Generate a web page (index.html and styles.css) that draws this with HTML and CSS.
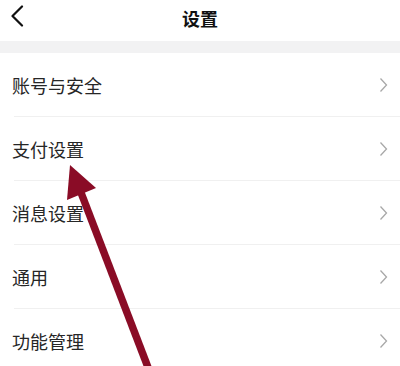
FILE: index.html
```html
<!DOCTYPE html>
<html>
<head>
<meta charset="utf-8">
<link rel="stylesheet" href="styles.css">
</head>
<body>
<div class="page">
  <header class="topbar">
    <svg class="back" viewBox="0 0 14 22" width="14" height="22"><path d="M12 1.5 L2.5 11 L12 20.5" fill="none" stroke="#111" stroke-width="2.2" stroke-linecap="round" stroke-linejoin="round"/></svg>
    <h1 class="title">设置</h1>
  </header>
  <div class="band"></div>
  <ul class="list">
    <li class="row"><span class="label">账号与安全</span><svg class="chev" viewBox="0 0 9 16" width="9" height="16"><path d="M1.5 1.5 L7.5 8 L1.5 14.5" fill="none" stroke="#a8a8a8" stroke-width="1.3"/></svg></li>
    <li class="row"><span class="label">支付设置</span><svg class="chev" viewBox="0 0 9 16" width="9" height="16"><path d="M1.5 1.5 L7.5 8 L1.5 14.5" fill="none" stroke="#a8a8a8" stroke-width="1.3"/></svg></li>
    <li class="row"><span class="label">消息设置</span><svg class="chev" viewBox="0 0 9 16" width="9" height="16"><path d="M1.5 1.5 L7.5 8 L1.5 14.5" fill="none" stroke="#a8a8a8" stroke-width="1.3"/></svg></li>
    <li class="row"><span class="label">通用</span><svg class="chev" viewBox="0 0 9 16" width="9" height="16"><path d="M1.5 1.5 L7.5 8 L1.5 14.5" fill="none" stroke="#a8a8a8" stroke-width="1.3"/></svg></li>
    <li class="row"><span class="label">功能管理</span><svg class="chev" viewBox="0 0 9 16" width="9" height="16"><path d="M1.5 1.5 L7.5 8 L1.5 14.5" fill="none" stroke="#a8a8a8" stroke-width="1.3"/></svg></li>
  </ul>
  <svg class="pointer" viewBox="0 0 400 366" width="400" height="366">
    <line x1="80" y1="190" x2="149" y2="370" stroke="#8a0c26" stroke-width="7.5"/>
    <polygon points="70,165 96,188 67,200" fill="#8a0c26"/>
  </svg>
</div>
</body>
</html>
```
FILE: styles.css
```css
* { box-sizing: border-box; }
html, body { margin: 0; padding: 0; background: #fff; }
body { font-family: "Noto Sans CJK SC", "Noto Sans", sans-serif; color: #222; }
.page { position: relative; width: 400px; height: 366px; overflow: hidden; }
.topbar { position: relative; height: 41px; display: flex; align-items: center; justify-content: center; background: #fff; }
.back { position: absolute; left: 10px; top: 5px; }
.title { margin: 0; font-size: 18px; font-weight: 700; color: #111; line-height: 1; margin-top: -5px; }
.band { height: 12px; background: #f2f2f3; }
.list { list-style: none; margin: 0; padding: 0 0 0 14px; }
.row { height: 64px; display: flex; align-items: center; justify-content: space-between; border-bottom: 1px solid #f0f0f0; padding-right: 12px; }
.label { font-size: 18px; margin-left: -2px; color: #262626; }
.chev { display: block; }
.pointer { position: absolute; left: 0; top: 0; }
```
